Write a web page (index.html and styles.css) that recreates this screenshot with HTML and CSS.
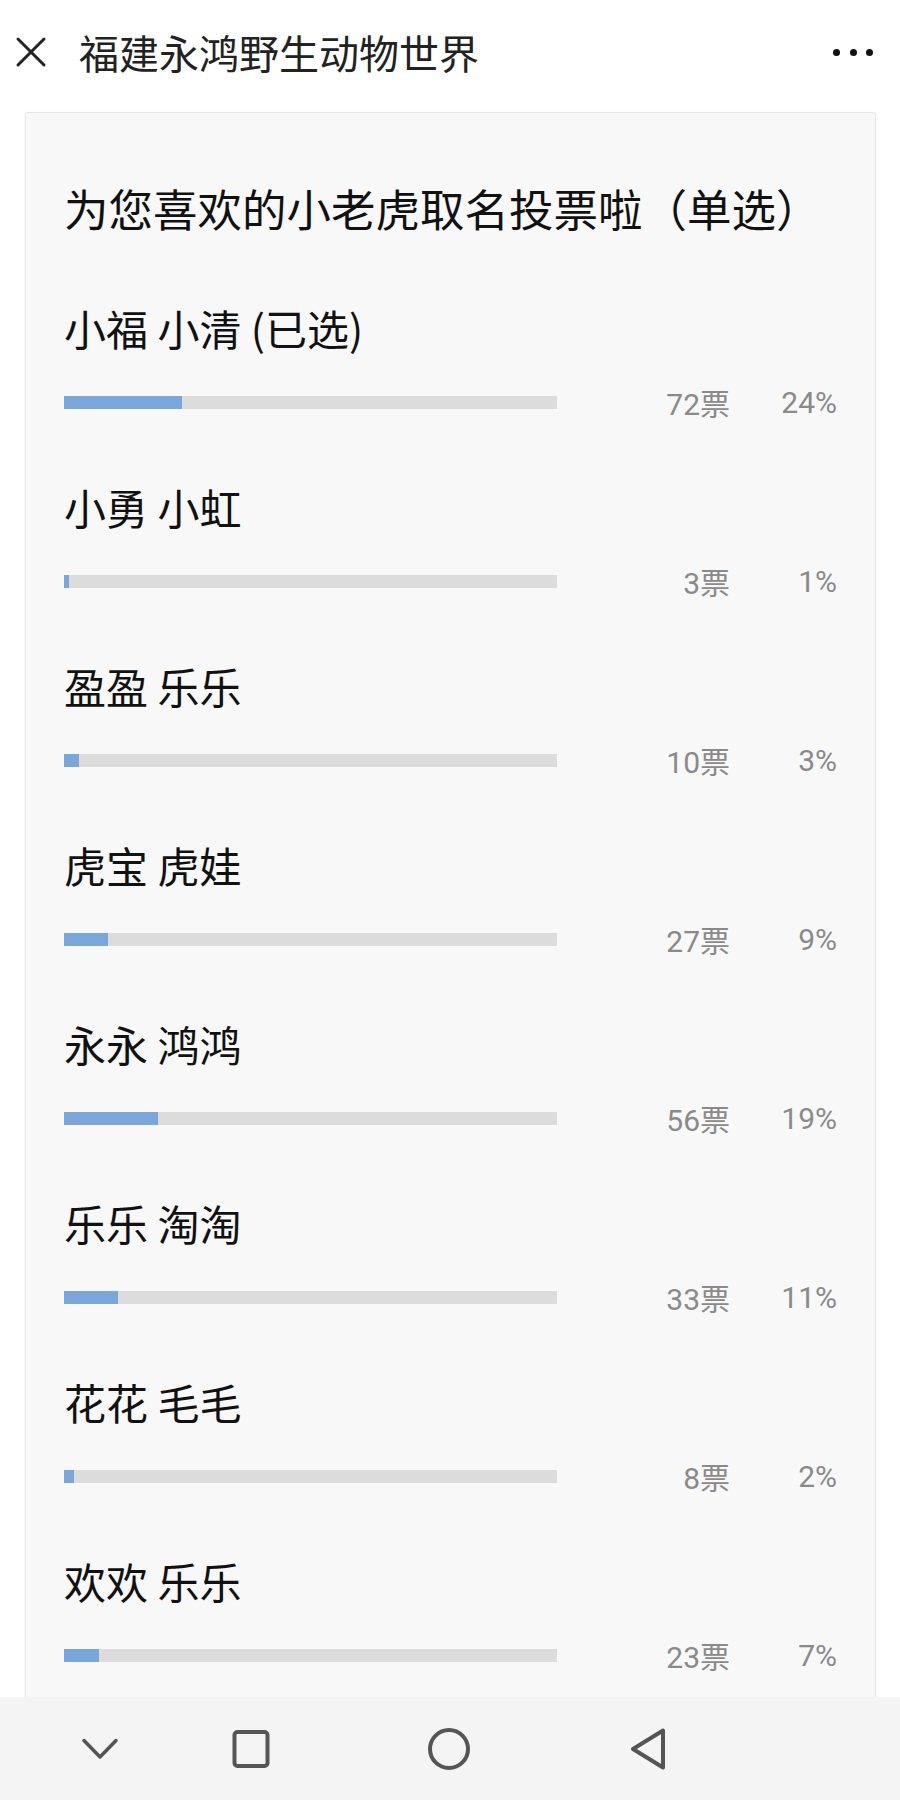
FILE: index.html
```html
<!DOCTYPE html>
<html lang="zh-CN">
<head>
<meta charset="utf-8">
<title>福建永鸿野生动物世界</title>
<link rel="stylesheet" href="styles.css">
</head>
<body>
<div class="screen">
  <header class="topbar">
    <svg class="close" width="32" height="32" viewBox="0 0 32 32"><path d="M3 3 L29 29 M29 3 L3 29" stroke="#222" stroke-width="3" stroke-linecap="round" fill="none"/></svg>
    <h1 class="page-title">福建永鸿野生动物世界</h1>
    <div class="more"><span class="dot"></span><span class="dot"></span><span class="dot"></span></div>
  </header>
  <main class="content">
    <section class="card">
      <h2 class="vote-title">为您喜欢的小老虎取名投票啦（单选）</h2>
      <ul class="options">
        <li class="option">
          <div class="label">小福 小清 (已选)</div>
          <div class="stats"><div class="bar"><div class="fill" style="width:24%"></div></div><span class="votes">72票</span><span class="pct">24%</span></div>
        </li>
        <li class="option">
          <div class="label">小勇 小虹</div>
          <div class="stats"><div class="bar"><div class="fill" style="width:1%"></div></div><span class="votes">3票</span><span class="pct">1%</span></div>
        </li>
        <li class="option">
          <div class="label">盈盈 乐乐</div>
          <div class="stats"><div class="bar"><div class="fill" style="width:3%"></div></div><span class="votes">10票</span><span class="pct">3%</span></div>
        </li>
        <li class="option">
          <div class="label">虎宝 虎娃</div>
          <div class="stats"><div class="bar"><div class="fill" style="width:9%"></div></div><span class="votes">27票</span><span class="pct">9%</span></div>
        </li>
        <li class="option">
          <div class="label">永永 鸿鸿</div>
          <div class="stats"><div class="bar"><div class="fill" style="width:19%"></div></div><span class="votes">56票</span><span class="pct">19%</span></div>
        </li>
        <li class="option">
          <div class="label">乐乐 淘淘</div>
          <div class="stats"><div class="bar"><div class="fill" style="width:11%"></div></div><span class="votes">33票</span><span class="pct">11%</span></div>
        </li>
        <li class="option">
          <div class="label">花花 毛毛</div>
          <div class="stats"><div class="bar"><div class="fill" style="width:2%"></div></div><span class="votes">8票</span><span class="pct">2%</span></div>
        </li>
        <li class="option">
          <div class="label">欢欢 乐乐</div>
          <div class="stats"><div class="bar"><div class="fill" style="width:7%"></div></div><span class="votes">23票</span><span class="pct">7%</span></div>
        </li>
      </ul>
    </section>
  </main>
  <nav class="navbar">
    <svg class="nav-icon nav-down" width="40" height="24" viewBox="0 0 40 24"><path d="M4 3.5 L20 20 L36 3.5" stroke="#555" stroke-width="3.5" stroke-linecap="round" stroke-linejoin="round" fill="none"/></svg>
    <svg class="nav-icon nav-square" width="40" height="40" viewBox="0 0 40 40"><rect x="3.5" y="3" width="33" height="34" rx="3" stroke="#555" stroke-width="4" fill="none"/></svg>
    <svg class="nav-icon nav-circle" width="46" height="46" viewBox="0 0 46 46"><circle cx="23" cy="23" r="19" stroke="#555" stroke-width="4" fill="none"/></svg>
    <svg class="nav-icon nav-back" width="40" height="46" viewBox="0 0 40 46"><path d="M5 23 L35 4.5 L35 41.5 Z" stroke="#555" stroke-width="4" stroke-linejoin="round" fill="none"/></svg>
  </nav>
</div>
</body>
</html>
```
FILE: styles.css
```css
* { box-sizing: border-box; }
html, body { margin: 0; padding: 0; background: #fff; }
body { font-family: "Noto Sans CJK SC", "Noto Sans", sans-serif; color: #111; }

.screen { width: 900px; height: 1800px; display: flex; flex-direction: column; overflow: hidden; }

.topbar { height: 104px; flex: none; display: flex; align-items: center; padding: 0 27px 0 15px; background: #fff; }
.close { flex: none; }
.page-title { margin: 0 0 0 32px; font-size: 40px; font-weight: 400; line-height: 50px; color: #222; flex: 1; white-space: nowrap; }
.more { display: flex; gap: 9.5px; align-items: center; }
.dot { width: 7px; height: 7px; border-radius: 50%; background: #111; }

.content { flex: 1; min-height: 0; overflow: hidden; padding: 8px 24px 0 25px; }
.card { background: #f8f8f9; border: 1px solid #e6e6e8; border-radius: 3px; padding: 65px 38px 40px 38px; box-shadow: 0 0 3px rgba(0,0,0,0.04); }

.vote-title { margin: 0 0 62px; font-size: 44.5px; font-weight: 400; line-height: 60px; color: #111; white-space: nowrap; }

.options { list-style: none; margin: 0; padding: 0; display: flex; flex-direction: column; gap: 57px; }
.option { display: flex; flex-direction: column; }
.label { font-size: 42px; line-height: 56px; color: #111; white-space: nowrap; }
.stats { margin-top: 26px; height: 40px; display: flex; align-items: center; }
.bar { width: 493px; height: 13px; background: #dcdcdc; flex: none; }
.fill { height: 100%; background: #79a7dc; }
.votes, .pct { font-family: Roboto, "Noto Sans CJK SC", sans-serif; font-size: 30px; color: #8a8a8a; text-align: right; white-space: nowrap; }
.votes { width: 173px; }
.pct { width: 107px; }

.navbar { height: 103px; flex: none; background: #f4f4f5; display: flex; align-items: center; padding-left: 80px; }
.nav-square { margin-left: 111px; }
.nav-circle { margin-left: 155px; }
.nav-back { margin-left: 156px; }
```
